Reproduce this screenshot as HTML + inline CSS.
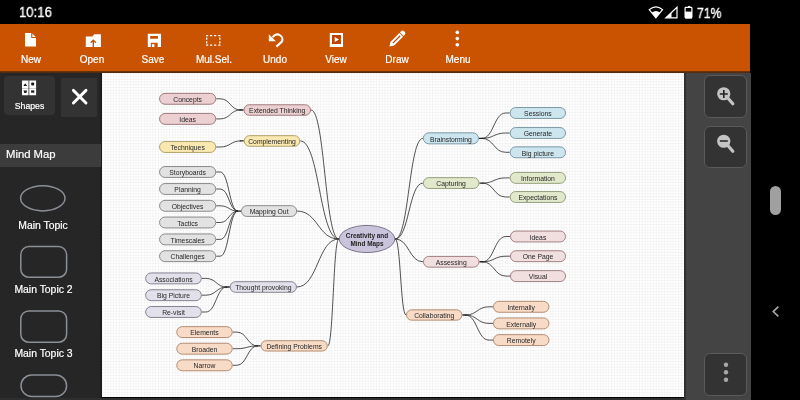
<!DOCTYPE html>
<html><head><meta charset="utf-8">
<style>
html,body{margin:0;padding:0;width:800px;height:400px;overflow:hidden;background:#000;font-family:"Liberation Sans",sans-serif;}
.a{position:absolute;will-change:transform;}
#status{left:0;top:0;width:800px;height:24px;background:#000;}
#time{left:19px;top:4px;color:#fff;font-size:14.6px;-webkit-text-stroke:0.35px #fff;transform:scaleX(0.9);transform-origin:0 0;}
#pct{left:697px;top:4.7px;color:#fff;font-size:14px;-webkit-text-stroke:0.4px #fff;transform:scaleX(0.87);transform-origin:0 0;}
#tool{left:0;top:24px;width:750px;height:47px;background:#c95300;}
#toolshadow{left:0;top:70.5px;width:750px;height:2.5px;background:linear-gradient(#7a3500,#2a2320);}
.lbl{color:#fff;font-size:10px;-webkit-text-stroke:0.2px #fff;text-align:center;width:60px;top:54px;}
#left{left:0;top:73px;width:102px;height:327px;background:#262626;}
#leftedge{left:100px;top:73px;width:2px;height:327px;background:#1c1c1c;}
.btn{background:#333;border-radius:5px;}
#canvas{left:102px;top:73px;width:582px;height:324px;background-color:#fff;
 background-image:linear-gradient(to right, rgba(0,0,0,0.035) 1px, transparent 1px),linear-gradient(to bottom, rgba(0,0,0,0.035) 1px, transparent 1px);
 background-size:2.8px 2.8px;}
#right{left:684px;top:73px;width:67px;height:327px;background:#444;border-left:2px solid #303030;box-sizing:border-box;}
.zbtn{background:#333;border:1px solid #5a5a5a;border-radius:6px;box-sizing:border-box;}
#bottomline{left:0;top:397.5px;width:684px;height:3px;background:#2e2e2e;}
</style></head><body>
<div class="a" id="status"></div>
<div class="a" id="time">10:16</div>
<div class="a" id="pct">71%</div>
<div class="a" id="tool"></div>
<div class="a" id="toolshadow"></div>
<div class="a lbl" style="left:1px">New</div>
<div class="a lbl" style="left:62px">Open</div>
<div class="a lbl" style="left:123px">Save</div>
<div class="a lbl" style="left:184px">Mul.Sel.</div>
<div class="a lbl" style="left:245px">Undo</div>
<div class="a lbl" style="left:306px">View</div>
<div class="a lbl" style="left:367px">Draw</div>
<div class="a lbl" style="left:428px">Menu</div>

<div class="a" id="left"></div>
<div class="a" id="leftedge"></div>
<div class="a btn" style="left:3.8px;top:75.8px;width:51.2px;height:39.3px;border-radius:4px;"></div>
<div class="a btn" style="left:60.6px;top:77.6px;width:35.7px;height:38.8px;border-radius:1px;"></div>
<div class="a" style="left:0;top:144px;width:101px;height:23px;background:#3c3c3c;"></div>
<div class="a" style="left:6px;top:148px;color:#fff;font-size:11.3px;-webkit-text-stroke:0.2px #fff;">Mind Map</div>
<div class="a" style="left:0;top:101px;width:59px;text-align:center;color:#fff;font-size:8.7px;-webkit-text-stroke:0.2px #fff;">Shapes</div>

<div class="a" id="canvas"></div>
<div class="a" id="right"></div>
<div class="a zbtn" style="left:704.4px;top:75.3px;width:42.5px;height:42.5px;"></div>
<div class="a zbtn" style="left:704.4px;top:126.2px;width:42.5px;height:42px;"></div>
<div class="a zbtn" style="left:704.2px;top:352.7px;width:42.6px;height:42.8px;"></div>
<div class="a" id="bottomline"></div>
<svg class="a" style="left:0;top:0" width="800" height="400" viewBox="0 0 800 400">
<!-- New -->
<path fill="#fff" d="M25 32.9H31.2V38H36V46.6H25Z"/><path fill="#fff" d="M32.3 33.4L35.7 36.9H32.3Z"/>
<!-- Open -->
<path fill="#fff" d="M85.8 36.4H92.3L94.4 34.3H100.9V47H85.8Z"/>
<path fill="none" stroke="#c95300" stroke-width="1.4" d="M93.3 47V40.2M90.7 42.8L93.3 40.2L95.9 42.8"/>
<!-- Save -->
<path fill="#fff" fill-rule="evenodd" d="M147.8 33.8H161V47H147.8ZM150.2 36H157.9V38.7H150.2ZM150.8 42.8H157.7V47H150.8Z"/>
<rect x="151.9" y="44.2" width="2.5" height="2.8" fill="#fff"/>
<!-- Mul.Sel -->
<path fill="#fff" d="M206 35H208.2V36.3H206ZM206 44.5H208.2V45.8H206ZM210 35H212.2V36.3H210ZM210 44.5H212.2V45.8H210ZM214.1 35H216.29999999999998V36.3H214.1ZM214.1 44.5H216.29999999999998V45.8H214.1ZM218.3 35H220.5V36.3H218.3ZM218.3 44.5H220.5V45.8H218.3ZM206 37.6H207.3V39.800000000000004H206ZM219.2 37.6H220.5V39.800000000000004H219.2ZM206 41.2H207.3V43.400000000000006H206ZM219.2 41.2H220.5V43.400000000000006H219.2Z"/>
<!-- Undo -->
<path fill="#fff" d="M268.8 34.2V41.2H275.8Z"/>
<path fill="none" stroke="#fff" stroke-width="2.1" d="M272.7 37.4A4.9 4.9 0 1 1 281.9 41.6L276.4 46.6"/>
<!-- View -->
<path fill="#fff" fill-rule="evenodd" d="M329.8 32.9H343V47H329.8ZM332 35.1H340.8V44H332Z"/>
<rect x="332" y="35.1" width="8.8" height="8.9" fill="#bb4200"/><path fill="#fff" d="M334.7 37V42L339.1 39.5Z"/>
<!-- Draw -->
<g transform="translate(389.4,46.6) rotate(-45)"><path fill="#fff" d="M0 0L4 -2.6H16.7V2.6H4Z"/><path fill="#fff" d="M17.5 -2.6H18.8A2.6 2.6 0 0 1 18.8 2.6H17.5Z"/><rect x="5" y="-0.6" width="10.3" height="1.2" fill="#b84400"/></g>
<!-- Menu dots -->
<g fill="#fff"><circle cx="457.3" cy="32.4" r="1.8"/><circle cx="457.3" cy="38.6" r="1.8"/><circle cx="457.3" cy="44.8" r="1.8"/></g>
<!-- status icons -->
<path fill="none" stroke="#fff" stroke-width="1.2" d="M649.2 9.6Q656 4.2 662.6 9.6L655.9 17.8Z"/>
<path fill="#fff" d="M651.8 12.6Q656 9.6 660 12.6L655.9 17.8Z"/>
<path fill="none" stroke="#fff" stroke-width="1.2" stroke-linejoin="miter" d="M665.8 17.8H677V7.2Z"/>
<path fill="#fff" d="M665.8 17.8H671.5V12.3Z"/>
<rect x="688" y="6.1" width="2.3" height="1.6" fill="#fff"/>
<rect x="685.1" y="7.3" width="6.8" height="10.5" rx="0.8" fill="none" stroke="#fff" stroke-width="1.2"/>
<rect x="685" y="11.6" width="7" height="6.8" fill="#fff"/>
<!-- left panel -->
<path fill="#fff" d="M22 80.6H28.5V87.9H22ZM29.3 80.6H36.1V87.9H29.3ZM22 88.3H28.5V95.2H22ZM29.3 88.3H36.1V95.2H29.3Z"/>
<g fill="#1a1a1a"><path d="M25.3 83.2L27.2 86.1H23.4Z"/><rect x="31.2" y="82.4" width="2.9" height="3.2" rx="0.8"/><path d="M23.5 90.6H27.1L26.3 92.9H24.3Z"/><rect x="31.1" y="90.4" width="3.2" height="2.3"/></g>
<path stroke="#fff" stroke-width="2.9" stroke-linecap="round" d="M73.4 90.4L86 103M86 90.4L73.4 103"/>
<g fill="none" stroke="#8a8f96" stroke-width="1.5">
<ellipse cx="42.8" cy="198.3" rx="22.2" ry="12.6"/>
<rect x="20.8" y="246.6" width="45.8" height="30.6" rx="8"/>
<rect x="20.8" y="311" width="45.8" height="31.2" rx="8"/>
<rect x="21" y="375" width="45.6" height="21.4" rx="10.7"/>
</g>
<!-- right panel -->
<g fill="#c4c4c4"><circle cx="723.75" cy="93.75" r="6.6"/><path stroke="#c4c4c4" stroke-width="3.2" stroke-linecap="round" d="M728.5 98.8L732.8 103.8"/>
<circle cx="723.75" cy="141.25" r="6.6"/><path stroke="#c4c4c4" stroke-width="3.2" stroke-linecap="round" d="M728.5 146.3L732.8 151.3"/></g>
<path stroke="#222" stroke-width="1.6" d="M719.8 94H727.8M723.8 90V98M719.8 141H727.8"/>
<g fill="#a8a8a8"><circle cx="726" cy="364.7" r="2.2"/><circle cx="726" cy="372.3" r="2.2"/><circle cx="726" cy="379.8" r="2.2"/></g>
<rect x="770" y="186" width="11" height="29" rx="5.5" fill="#a0a0a0"/>
<path fill="none" stroke="#a8a8a8" stroke-width="1.6" d="M778.4 306.6L773.2 311.6L778.4 316.4"/>
</svg>
<div class="a" style="left:0;top:219.5px;width:86px;text-align:center;color:#fff;font-size:10.4px;-webkit-text-stroke:0.2px #fff;">Main Topic</div>
<div class="a" style="left:0;top:283.5px;width:87px;text-align:center;color:#fff;font-size:10.4px;-webkit-text-stroke:0.2px #fff;">Main Topic 2</div>
<div class="a" style="left:0;top:347.5px;width:87px;text-align:center;color:#fff;font-size:10.4px;-webkit-text-stroke:0.2px #fff;">Main Topic 3</div>
<svg class="a" style="left:0;top:0" width="800" height="400" viewBox="0 0 800 400">
<g fill="none" stroke="#262626" stroke-width="0.8">
<path d="M311.0 110.0C324.9 110.0 324.9 239.0 338.8 239.0H338.8M300.2 140.9C319.5 140.9 319.5 239.0 338.8 239.0H338.8M297.1 211.1C318.0 211.1 318.0 239.0 338.8 239.0H338.8M296.9 287.0C317.9 287.0 317.9 239.0 338.8 239.0H338.8M327.8 345.9C333.3 345.9 333.3 239.0 338.8 239.0H338.8M395.2 239H395.2L395.2 239.0C409.0 239.0 409.0 138.4 422.9 138.4M395.2 239H395.2L395.2 239.0C409.0 239.0 409.0 183.1 422.9 183.1M395.2 239H395.2L395.2 239.0C409.1 239.0 409.1 261.8 423.0 261.8M395.2 239H395.2L395.2 239.0C400.6 239.0 400.6 315.0 406.0 315.0M216.2 98.8H220.2L220.2 98.8C230.3 98.8 230.3 110.0 240.5 110.0M216.2 118.9H220.2L220.2 118.9C230.3 118.9 230.3 110.0 240.5 110.0M216.2 147.0H220.2L220.2 147.0C230.5 147.0 230.5 140.9 240.8 140.9M216.2 172.0H220.2L220.2 172.0C229.1 172.0 229.1 211.1 238.0 211.1M216.2 189.0H220.2L220.2 189.0C229.1 189.0 229.1 211.1 238.0 211.1M216.2 205.8H220.2L220.2 205.8C229.1 205.8 229.1 211.1 238.0 211.1M216.2 222.5H220.2L220.2 222.5C229.1 222.5 229.1 211.1 238.0 211.1M216.2 239.4H220.2L220.2 239.4C229.1 239.4 229.1 211.1 238.0 211.1M216.2 256.2H220.2L220.2 256.2C229.1 256.2 229.1 211.1 238.0 211.1M201.8 278.4H205.8L205.8 278.4C216.3 278.4 216.3 287.0 226.8 287.0M201.8 295.2H205.8L205.8 295.2C216.3 295.2 216.3 287.0 226.8 287.0M201.8 312.0H205.8L205.8 312.0C216.3 312.0 216.3 287.0 226.8 287.0M232.7 332.1H236.7L236.7 332.1C247.2 332.1 247.2 345.9 257.6 345.9M232.7 348.7H236.7L236.7 348.7C247.2 348.7 247.2 345.9 257.6 345.9M232.7 365.3H236.7L236.7 365.3C247.2 365.3 247.2 345.9 257.6 345.9M481.9 138.4C493.8 138.4 493.8 113.0 505.7 113.0H509.7M481.9 138.4C493.8 138.4 493.8 133.0 505.7 133.0H509.7M481.9 138.4C493.8 138.4 493.8 152.3 505.7 152.3H509.7M482.4 183.1C494.0 183.1 494.0 177.9 505.7 177.9H509.7M482.4 183.1C494.0 183.1 494.0 197.0 505.7 197.0H509.7M482.4 261.8C494.2 261.8 494.2 236.5 506.0 236.5H510.0M482.4 261.8C494.2 261.8 494.2 256.2 506.0 256.2H510.0M482.4 261.8C494.2 261.8 494.2 276.1 506.0 276.1H510.0M465.4 315.0C477.2 315.0 477.2 306.8 489.0 306.8H493.0M465.4 315.0C477.2 315.0 477.2 323.4 489.0 323.4H493.0M465.4 315.0C477.2 315.0 477.2 340.1 489.0 340.1H493.0"/>
</g>
<path fill="none" stroke="#222" stroke-width="1.4" d="M239.5 110.0H243.5M239.8 140.9H243.8M237.0 211.1H241.0M225.8 287.0H229.8M256.6 345.9H260.6M478.9 138.4H482.9M479.4 183.1H483.4M479.4 261.8H483.4M462.4 315.0H466.4"/>
<g stroke-width="0.9" font-size="6.8" text-anchor="middle" fill="#262626">
<rect x="243.95" y="104.75" width="66.60" height="10.50" rx="5.25" fill="#ebcfd1" stroke="#9a7074"/>
<rect x="244.25" y="135.65" width="55.50" height="10.60" rx="5.30" fill="#f9e9b0" stroke="#a89a5c"/>
<rect x="241.45" y="205.70" width="55.20" height="10.75" rx="5.38" fill="#e2e2e2" stroke="#808080"/>
<rect x="230.20" y="281.70" width="66.25" height="10.60" rx="5.30" fill="#e2e0ea" stroke="#7a7888"/>
<rect x="261.05" y="340.70" width="66.25" height="10.35" rx="5.17" fill="#f7dbc7" stroke="#ad8264"/>
<rect x="423.35" y="132.85" width="55.10" height="11.00" rx="5.50" fill="#cde5ef" stroke="#6f909c"/>
<rect x="423.35" y="177.65" width="55.60" height="10.80" rx="5.40" fill="#e2e8cc" stroke="#8a9770"/>
<rect x="423.45" y="256.45" width="55.50" height="10.70" rx="5.35" fill="#f1dfe0" stroke="#9a7678"/>
<rect x="406.45" y="309.85" width="55.50" height="10.30" rx="5.15" fill="#f7dbc7" stroke="#ad8264"/>
<rect x="159.55" y="93.35" width="56.20" height="10.90" rx="5.45" fill="#ebcfd1" stroke="#9a7074"/>
<rect x="159.55" y="113.45" width="56.20" height="10.90" rx="5.45" fill="#ebcfd1" stroke="#9a7074"/>
<rect x="159.55" y="141.55" width="56.20" height="10.90" rx="5.45" fill="#f9e9b0" stroke="#a89a5c"/>
<rect x="159.55" y="166.55" width="56.20" height="10.90" rx="5.45" fill="#e2e2e2" stroke="#808080"/>
<rect x="159.55" y="183.55" width="56.20" height="10.90" rx="5.45" fill="#e2e2e2" stroke="#808080"/>
<rect x="159.55" y="200.35" width="56.20" height="10.90" rx="5.45" fill="#e2e2e2" stroke="#808080"/>
<rect x="159.55" y="217.05" width="56.20" height="10.90" rx="5.45" fill="#e2e2e2" stroke="#808080"/>
<rect x="159.55" y="233.95" width="56.20" height="10.90" rx="5.45" fill="#e2e2e2" stroke="#808080"/>
<rect x="159.55" y="250.75" width="56.20" height="10.90" rx="5.45" fill="#e2e2e2" stroke="#808080"/>
<rect x="145.65" y="272.95" width="55.70" height="10.90" rx="5.45" fill="#e2e0ea" stroke="#7a7888"/>
<rect x="145.65" y="289.75" width="55.70" height="10.90" rx="5.45" fill="#e2e0ea" stroke="#7a7888"/>
<rect x="145.65" y="306.55" width="55.70" height="10.90" rx="5.45" fill="#e2e0ea" stroke="#7a7888"/>
<rect x="176.75" y="326.65" width="55.50" height="10.90" rx="5.45" fill="#f7dbc7" stroke="#ad8264"/>
<rect x="176.75" y="343.25" width="55.50" height="10.90" rx="5.45" fill="#f7dbc7" stroke="#ad8264"/>
<rect x="176.75" y="359.85" width="55.50" height="10.90" rx="5.45" fill="#f7dbc7" stroke="#ad8264"/>
<rect x="510.15" y="107.55" width="55.40" height="10.90" rx="5.45" fill="#cde5ef" stroke="#6f909c"/>
<rect x="510.15" y="127.55" width="55.40" height="10.90" rx="5.45" fill="#cde5ef" stroke="#6f909c"/>
<rect x="510.15" y="146.85" width="55.40" height="10.90" rx="5.45" fill="#cde5ef" stroke="#6f909c"/>
<rect x="510.15" y="172.45" width="55.40" height="10.90" rx="5.45" fill="#e2e8cc" stroke="#8a9770"/>
<rect x="510.15" y="191.55" width="55.40" height="10.90" rx="5.45" fill="#e2e8cc" stroke="#8a9770"/>
<rect x="510.45" y="231.05" width="55.10" height="10.90" rx="5.45" fill="#f1dfe0" stroke="#9a7678"/>
<rect x="510.45" y="250.75" width="55.10" height="10.90" rx="5.45" fill="#f1dfe0" stroke="#9a7678"/>
<rect x="510.45" y="270.65" width="55.10" height="10.90" rx="5.45" fill="#f1dfe0" stroke="#9a7678"/>
<rect x="493.45" y="301.35" width="55.50" height="10.90" rx="5.45" fill="#f7dbc7" stroke="#ad8264"/>
<rect x="493.45" y="317.95" width="55.50" height="10.90" rx="5.45" fill="#f7dbc7" stroke="#ad8264"/>
<rect x="493.45" y="334.65" width="55.50" height="10.90" rx="5.45" fill="#f7dbc7" stroke="#ad8264"/>
</g>
<g font-size="6.8" text-anchor="middle" fill="#262626">
<text x="277.2" y="113.2">Extended Thinking</text>
<text x="272.0" y="144.1">Complementing</text>
<text x="269.1" y="214.2">Mapping Out</text>
<text x="263.3" y="290.1">Thought provoking</text>
<text x="294.2" y="349.0">Defining Problems</text>
<text x="450.9" y="141.5">Brainstorming</text>
<text x="451.1" y="186.2">Capturing</text>
<text x="451.2" y="264.9">Assessing</text>
<text x="434.2" y="318.1">Collaborating</text>
<text x="187.6" y="102.0">Concepts</text>
<text x="187.6" y="122.1">Ideas</text>
<text x="187.6" y="150.2">Techniques</text>
<text x="187.6" y="175.2">Storyboards</text>
<text x="187.6" y="192.2">Planning</text>
<text x="187.6" y="209.0">Objectives</text>
<text x="187.6" y="225.7">Tactics</text>
<text x="187.6" y="242.6">Timescales</text>
<text x="187.6" y="259.4">Challenges</text>
<text x="173.5" y="281.5">Associations</text>
<text x="173.5" y="298.4">Big Picture</text>
<text x="173.5" y="315.1">Re-visit</text>
<text x="204.5" y="335.2">Elements</text>
<text x="204.5" y="351.9">Broaden</text>
<text x="204.5" y="368.4">Narrow</text>
<text x="537.9" y="116.2">Sessions</text>
<text x="537.9" y="136.2">Generate</text>
<text x="537.9" y="155.5">Big picture</text>
<text x="537.9" y="181.1">Information</text>
<text x="537.9" y="200.2">Expectations</text>
<text x="538.0" y="239.7">Ideas</text>
<text x="538.0" y="259.4">One Page</text>
<text x="538.0" y="279.2">Visual</text>
<text x="521.2" y="309.9">Internally</text>
<text x="521.2" y="326.5">Externally</text>
<text x="521.2" y="343.2">Remotely</text>
</g>
<ellipse cx="367" cy="239" rx="27.75" ry="13.55" fill="#c9c3dc" stroke="#6e6a80" stroke-width="0.9"/>
<g font-size="6.4" font-weight="bold" text-anchor="middle" fill="#222"><text x="367" y="237.8">Creativity and</text><text x="367" y="246.2">Mind Maps</text></g>
</svg>
</body></html>
